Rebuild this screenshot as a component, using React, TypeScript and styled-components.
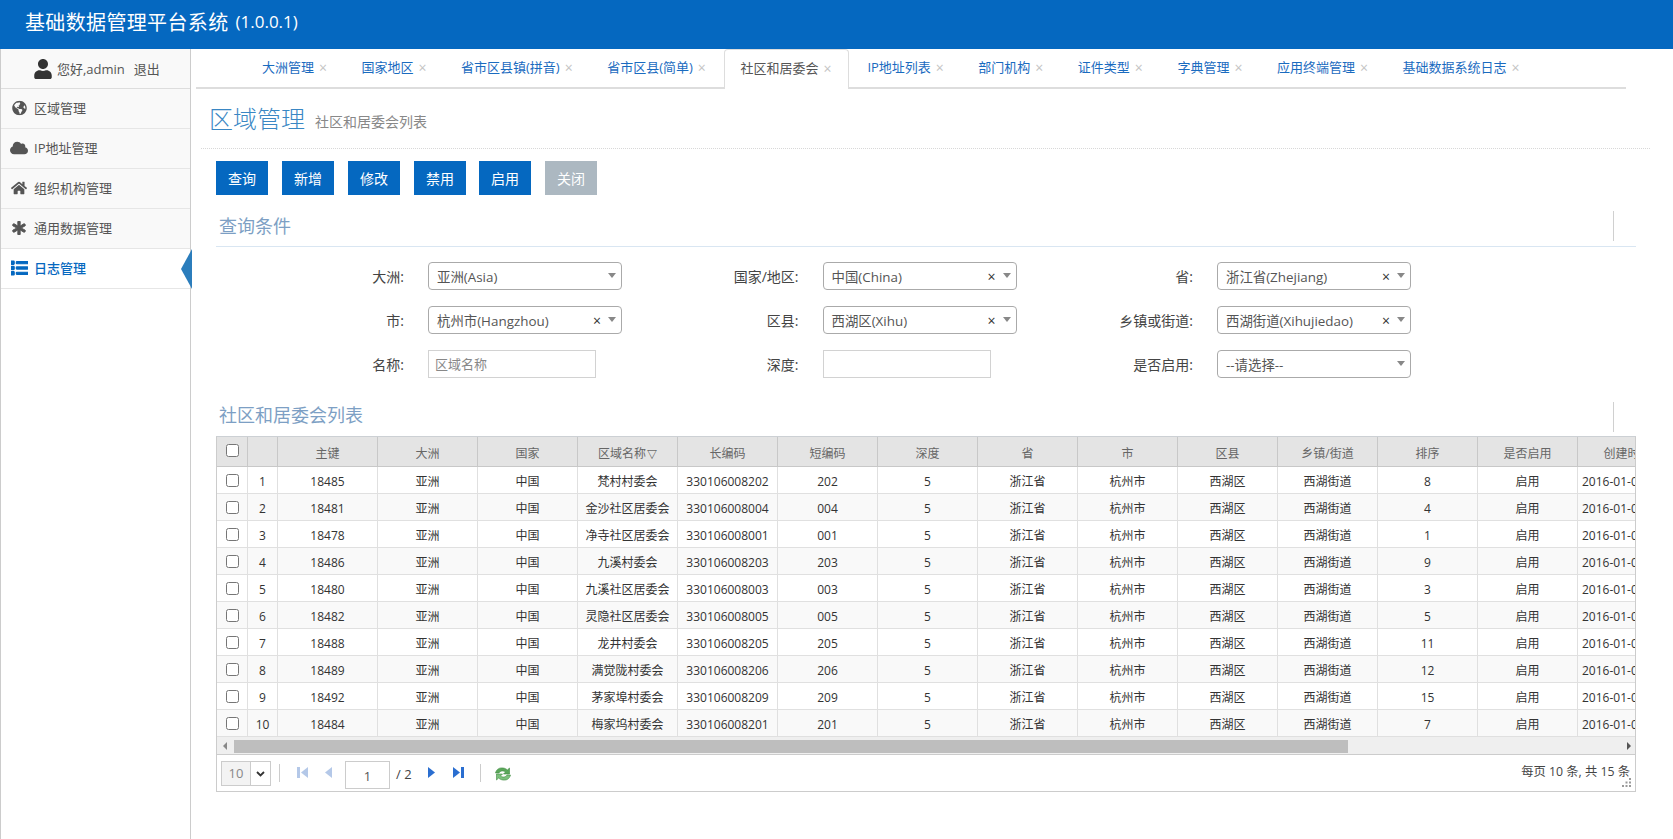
import { createGlobalStyle } from "styled-components";
import styled from "styled-components";
import { FaAsterisk, FaCloud, FaGlobeAmericas, FaHome, FaList, FaUser } from "react-icons/fa";

const BLUE = "#0568c0";

const GlobalStyle = createGlobalStyle`
  html, body {
    margin: 0;
    padding: 0;
    height: 839px;
    overflow: hidden;
    background: #fff;
    font-family: "Open Sans", "Noto Sans CJK SC", sans-serif;
    font-size: 13px;
    color: #333;
  }
  * { box-sizing: border-box; }
`;

const TopBar = styled.div`
  height: 49px;
  background: ${BLUE};
  color: #fff;
  padding-left: 25px;
  display: flex;
  align-items: center;
  padding-bottom: 6px;
`;

const BrandTitle = styled.span`
  font-size: 20px;
  letter-spacing: 0.35px;
`;

const BrandVersion = styled.span`
  font-size: 17px;
  margin-left: 7px;
`;

const Body = styled.div`
  display: flex;
  height: 790px;
`;

const Sidebar = styled.div`
  width: 191px;
  flex: none;
  border-left: 1px solid #ccc;
  border-right: 1px solid #ccc;
  height: 100%;
`;

const UserRow = styled.div`
  height: 40px;
  background: #f9f9f9;
  border-bottom: 1px solid #ddd;
  display: flex;
  align-items: center;
  padding-left: 32px;
  color: #555;
  svg {
    font-size: 20px;
    color: #333;
    margin-right: 4px;
  }
`;

const Logout = styled.span`
  margin-left: 9px;
`;

const MenuItem = styled.div<{ $active?: boolean }>`
  position: relative;
  height: 40px;
  background: ${(props) => (props.$active ? "#fff" : "#f9f9f9")};
  border-bottom: 1px solid #e6e6e6;
  display: flex;
  align-items: center;
  color: ${(props) => (props.$active ? BLUE : "#555")};
  font-weight: ${(props) => (props.$active ? 500 : 400)};
  padding: 0 0 2px 33px;
  svg {
    color: ${(props) => (props.$active ? BLUE : "#555")};
  }
`;

const MenuIcon = styled.span<{ $left: number; $size: number; $heavy?: boolean }>`
  position: absolute;
  left: ${(props) => props.$left}px;
  top: 50%;
  transform: translateY(-50%);
  display: flex;
  font-size: ${(props) => props.$size}px;
  margin-top: -1px;
  svg {
    ${(props) => (props.$heavy ? "stroke: currentColor; stroke-width: 36px;" : "")}
  }
`;

const ActiveArrow = styled.i`
  position: absolute;
  right: -2px;
  top: 0;
  width: 0;
  height: 0;
  border-top: 20px solid transparent;
  border-bottom: 20px solid transparent;
  border-right: 11px solid #2b7dbc;
`;

const Main = styled.div`
  flex: 1;
  min-width: 0;
`;

const TabBar = styled.div`
  height: 40px;
  width: 1430px;
  margin-left: 5px;
  padding-left: 50px;
  border-bottom: 2px solid #ddd;
  display: flex;
`;

const Tab = styled.div<{ $active?: boolean }>`
  height: ${(props) => (props.$active ? "40px" : "38px")};
  padding: 0 ${(props) => (props.$active ? "16.5px" : "15px")} 4px 15px;
  margin-right: 2.5px;
  display: flex;
  align-items: center;
  white-space: nowrap;
  color: ${(props) => (props.$active ? "#555" : "#1a6bbf")};
  background: #fff;
  border: 1px solid ${(props) => (props.$active ? "#ddd" : "transparent")};
  border-bottom: none;
  border-radius: 4px 4px 0 0;
`;

const TabClose = styled.span`
  color: #c4c4c4;
  font-size: 14px;
  width: 13px;
  text-align: right;
  line-height: 1;
  margin-top: 3px;
`;

const PageHead = styled.div`
  height: 60px;
  margin-left: 10px;
  width: 1449px;
  padding-left: 8px;
  border-bottom: 1px dotted #d8d8d8;
  display: flex;
  align-items: center;
`;

const PageTitle = styled.span`
  font-size: 24px;
  font-weight: 300;
  color: #3a87c4;
  margin-top: -2px;
`;

const PageSub = styled.span`
  font-size: 14px;
  color: #888;
  margin-left: 10px;
  margin-top: 5px;
`;

const Toolbar = styled.div`
  display: flex;
  margin: 12px 0 0 25px;
`;

const ActionButton = styled.div<{ $off?: boolean }>`
  width: 52px;
  height: 34px;
  margin-right: 14px;
  background: ${(props) => (props.$off ? "#acb8c1" : BLUE)};
  color: #fff;
  font-size: 14px;
  display: flex;
  align-items: center;
  justify-content: center;
  &:nth-child(4) {
    margin-right: 13px;
  }
`;

const SectionHead = styled.div<{ $line?: boolean }>`
  position: relative;
  width: 1420px;
  height: ${(props) => (props.$line ? "38px" : "30px")};
  margin: ${(props) => (props.$line ? "14px" : "22px")} 0 0 25px;
  padding-left: 3px;
  padding-top: ${(props) => (props.$line ? "2px" : "0")};
  font-size: 18px;
  color: #7d9fc4;
  border-bottom: ${(props) => (props.$line ? "1px solid #d9e6f2" : "none")};
  display: flex;
  align-items: flex-start;
  line-height: 30px;
`;

const SectionTick = styled.i`
  position: absolute;
  right: 22px;
  top: 2px;
  height: 30px;
  width: 1px;
  background: #d0d0d0;
`;

const FormGrid = styled.div`
  display: grid;
  grid-template-columns: repeat(3, 394.5px);
  grid-auto-rows: 28px;
  row-gap: 16px;
  margin: 15px 0 0 25px;
`;

const FieldGroup = styled.div`
  display: flex;
  align-items: center;
`;

const FieldLabel = styled.label`
  width: 188px;
  flex: none;
  margin-right: 24px;
  text-align: right;
  font-size: 14px;
  color: #444;
`;

const SelectBox = styled.div`
  position: relative;
  width: 194px;
  flex: none;
  height: 28px;
  border: 1px solid #aaa;
  border-radius: 4px;
  padding-left: 8px;
  line-height: 28px;
  font-size: 13.4px;
  color: #555;
  white-space: nowrap;
`;

const SelectClear = styled.span`
  position: absolute;
  right: 20px;
  top: 0;
  color: #333;
  font-size: 14px;
`;

const SelectCaret = styled.i`
  position: absolute;
  right: 5px;
  top: 10px;
  width: 0;
  height: 0;
  border-left: 4px solid transparent;
  border-right: 4px solid transparent;
  border-top: 5px solid #888;
`;

const TextBox = styled.div`
  width: 168px;
  flex: none;
  height: 28px;
  border: 1px solid #d2d2d2;
  padding-left: 6px;
  line-height: 26px;
  color: #888;
`;

const GridWrap = styled.div`
  width: 1420px;
  height: 356px;
  margin: 6px 0 0 25px;
  border: 1px solid #ccc;
  border-top: 1px solid #ccd0d4;
  overflow: hidden;
  position: relative;
`;

const GridTable = styled.table`
  border-collapse: separate;
  border-spacing: 0;
  table-layout: fixed;
  width: 1361px;
  font-size: 12px;
`;

const HeadCell = styled.th`
  height: 30px;
  padding: 2px 0 0;
  background: #e4e4e4;
  border-right: 1px solid #c8c8c8;
  border-bottom: 1px solid #c8c8c8;
  color: #666;
  font-weight: 400;
  text-align: center;
  white-space: nowrap;
  overflow: visible;
`;

const BodyCell = styled.td<{ $odd: boolean; $date?: boolean }>`
  height: 27px;
  padding: 2px 0 0 ${(props) => (props.$date ? "4px" : "0")};
  background: ${(props) => (props.$odd ? "#f9f9f9" : "#fff")};
  border-right: 1px solid #e0e0e0;
  border-bottom: 1px solid #e0e0e0;
  text-align: ${(props) => (props.$date ? "left" : "center")};
  white-space: nowrap;
  overflow: hidden;
`;

const CheckCell = styled(BodyCell)`
  padding: 0;
`;

const RowCheck = styled.input`
  display: block;
  margin: 0 auto;
  width: 13px;
  height: 13px;
`;

const HeadCheck = styled(RowCheck)`
  margin: -5px auto 0;
`;

const SortMark = styled.span`
  font-size: 10px;
  color: #333;
  margin-left: 1px;
`;

const ScrollTrack = styled.div`
  height: 18px;
  background: #efefef;
  border-bottom: 1px solid #ccc;
  position: relative;
  display: flex;
  align-items: center;
  justify-content: space-between;
  padding: 0 4px 0 6px;
`;

const ScrollThumb = styled.div`
  position: absolute;
  left: 17px;
  top: 3px;
  width: 1114px;
  height: 13px;
  background: #bebebe;
`;

const ScrollArrow = styled.i<{ $dir: "left" | "right"; $dark?: boolean }>`
  width: 0;
  height: 0;
  border-top: 4px solid transparent;
  border-bottom: 4px solid transparent;
  ${(props) => (props.$dir === "left" ? "border-right" : "border-left")}: 4px solid
    ${(props) => (props.$dark ? "#555" : "#888")};
`;

const Pager = styled.div`
  position: relative;
  height: 35px;
  display: flex;
  align-items: flex-start;
  padding: 6px 0 0 4px;
`;

const PageSizeBox = styled.div`
  width: 50px;
  height: 25px;
  border: 1px solid #ccc;
  display: flex;
`;

const PageSizeValue = styled.div`
  width: 29px;
  background: #f3f3f3;
  border-right: 1px solid #ccc;
  color: #888;
  font-size: 13px;
  line-height: 23px;
  text-align: center;
`;

const PageSizeCaret = styled.div`
  flex: 1;
  display: flex;
  align-items: center;
  justify-content: center;
`;

const PagerSep = styled.i<{ $left: number }>`
  width: 1px;
  height: 18px;
  margin: 3px 0 0 ${(props) => props.$left}px;
  background: #ccc;
`;

const PagerIcon = styled.svg<{ $left: number }>`
  display: block;
  margin: 5px 0 0 ${(props) => props.$left}px;
  flex: none;
`;

const PageInput = styled.div`
  width: 45px;
  height: 28px;
  margin-left: 13px;
  border: 1px solid #ccc;
  text-align: center;
  line-height: 29px;
  color: #555;
  font-size: 13px;
`;

const PageTotal = styled.span`
  margin-left: 6px;
  line-height: 26px;
  color: #444;
  font-size: 13px;
  white-space: nowrap;
`;

const PagerInfo = styled.span`
  position: absolute;
  right: 5px;
  top: 7px;
  font-size: 12.3px;
  color: #444;
`;

const ResizeGrip = styled.svg`
  position: absolute;
  right: 3px;
  bottom: 2px;
`;

interface RowData {
  id: string;
  name: string;
  code: string;
  sort: string;
}

const rows: RowData[] = [
  { id: "18485", name: "梵村村委会", code: "202", sort: "8" },
  { id: "18481", name: "金沙社区居委会", code: "004", sort: "4" },
  { id: "18478", name: "净寺社区居委会", code: "001", sort: "1" },
  { id: "18486", name: "九溪村委会", code: "203", sort: "9" },
  { id: "18480", name: "九溪社区居委会", code: "003", sort: "3" },
  { id: "18482", name: "灵隐社区居委会", code: "005", sort: "5" },
  { id: "18488", name: "龙井村委会", code: "205", sort: "11" },
  { id: "18489", name: "满觉陇村委会", code: "206", sort: "12" },
  { id: "18492", name: "茅家埠村委会", code: "209", sort: "15" },
  { id: "18484", name: "梅家坞村委会", code: "201", sort: "7" },
];

const tabs = [
  "大洲管理",
  "国家地区",
  "省市区县镇(拼音)",
  "省市区县(简单)",
  "社区和居委会",
  "IP地址列表",
  "部门机构",
  "证件类型",
  "字典管理",
  "应用终端管理",
  "基础数据系统日志",
];

const columns = ["主键", "大洲", "国家", "区域名称", "长编码", "短编码", "深度", "省", "市", "区县", "乡镇/街道", "排序", "是否启用", "创建时间"];

const App = () => {
  return (
    <>
      <GlobalStyle />
      <TopBar>
        <BrandTitle>基础数据管理平台系统</BrandTitle>
        <BrandVersion>(1.0.0.1)</BrandVersion>
      </TopBar>
      <Body>
        <Sidebar>
          <UserRow>
            <FaUser />
            您好,admin
            <Logout>退出</Logout>
          </UserRow>
          <MenuItem><MenuIcon $left={11} $size={15}><FaGlobeAmericas /></MenuIcon>区域管理</MenuItem>
          <MenuItem><MenuIcon $left={9} $size={18}><FaCloud /></MenuIcon>IP地址管理</MenuItem>
          <MenuItem><MenuIcon $left={10} $size={16}><FaHome /></MenuIcon>组织机构管理</MenuItem>
          <MenuItem><MenuIcon $left={11} $size={14} $heavy><FaAsterisk /></MenuIcon>通用数据管理</MenuItem>
          <MenuItem $active><MenuIcon $left={10} $size={17} $heavy><FaList /></MenuIcon>日志管理<ActiveArrow /></MenuItem>
        </Sidebar>
        <Main>
          <TabBar>
            {tabs.map((tab) => (
              <Tab key={tab} $active={tab === "社区和居委会"}>
                {tab}
                <TabClose>×</TabClose>
              </Tab>
            ))}
          </TabBar>
          <PageHead>
            <PageTitle>区域管理</PageTitle>
            <PageSub>社区和居委会列表</PageSub>
          </PageHead>
          <Toolbar>
            <ActionButton>查询</ActionButton>
            <ActionButton>新增</ActionButton>
            <ActionButton>修改</ActionButton>
            <ActionButton>禁用</ActionButton>
            <ActionButton>启用</ActionButton>
            <ActionButton $off>关闭</ActionButton>
          </Toolbar>
          <SectionHead $line>
            查询条件
            <SectionTick />
          </SectionHead>
          <FormGrid>
            <FieldGroup>
              <FieldLabel>大洲:</FieldLabel>
              <SelectBox>亚洲(Asia)<SelectCaret /></SelectBox>
            </FieldGroup>
            <FieldGroup>
              <FieldLabel>国家/地区:</FieldLabel>
              <SelectBox>中国(China)<SelectClear>×</SelectClear><SelectCaret /></SelectBox>
            </FieldGroup>
            <FieldGroup>
              <FieldLabel>省:</FieldLabel>
              <SelectBox>浙江省(Zhejiang)<SelectClear>×</SelectClear><SelectCaret /></SelectBox>
            </FieldGroup>
            <FieldGroup>
              <FieldLabel>市:</FieldLabel>
              <SelectBox>杭州市(Hangzhou)<SelectClear>×</SelectClear><SelectCaret /></SelectBox>
            </FieldGroup>
            <FieldGroup>
              <FieldLabel>区县:</FieldLabel>
              <SelectBox>西湖区(Xihu)<SelectClear>×</SelectClear><SelectCaret /></SelectBox>
            </FieldGroup>
            <FieldGroup>
              <FieldLabel>乡镇或街道:</FieldLabel>
              <SelectBox>西湖街道(Xihujiedao)<SelectClear>×</SelectClear><SelectCaret /></SelectBox>
            </FieldGroup>
            <FieldGroup>
              <FieldLabel>名称:</FieldLabel>
              <TextBox>区域名称</TextBox>
            </FieldGroup>
            <FieldGroup>
              <FieldLabel>深度:</FieldLabel>
              <TextBox />
            </FieldGroup>
            <FieldGroup>
              <FieldLabel>是否启用:</FieldLabel>
              <SelectBox>--请选择--<SelectCaret /></SelectBox>
            </FieldGroup>
          </FormGrid>
          <SectionHead>
            社区和居委会列表
            <SectionTick />
          </SectionHead>
          <GridWrap>
            <GridTable>
              <colgroup>
                <col width={31} />
                <col width={30} />
                {columns.map((col) => (
                  <col key={col} width={100} />
                ))}
              </colgroup>
              <thead>
                <tr>
                  <HeadCell><HeadCheck type="checkbox" readOnly /></HeadCell>
                  <HeadCell />
                  {columns.map((col) => (
                    <HeadCell key={col}>
                      {col}
                      {col === "区域名称" && <SortMark>▽</SortMark>}
                    </HeadCell>
                  ))}
                </tr>
              </thead>
              <tbody>
                {rows.map((row, index) => {
                  const odd = index % 2 === 1;
                  const cells = [row.id, "亚洲", "中国", row.name, `330106008${row.code}`, row.code, "5", "浙江省", "杭州市", "西湖区", "西湖街道", row.sort, "启用"];
                  return (
                    <tr key={row.id}>
                      <CheckCell $odd={odd}><RowCheck type="checkbox" readOnly /></CheckCell>
                      <BodyCell $odd={odd}>{index + 1}</BodyCell>
                      {cells.map((cell, cellIndex) => (
                        <BodyCell key={cellIndex} $odd={odd}>{cell}</BodyCell>
                      ))}
                      <BodyCell $odd={odd} $date>2016-01-01 12:00:00</BodyCell>
                    </tr>
                  );
                })}
              </tbody>
            </GridTable>
            <ScrollTrack>
              <ScrollArrow $dir="left" />
              <ScrollThumb />
              <ScrollArrow $dir="right" $dark />
            </ScrollTrack>
            <Pager>
              <PageSizeBox>
                <PageSizeValue>10</PageSizeValue>
                <PageSizeCaret>
                  <svg width="9" height="6" viewBox="0 0 9 6">
                    <path d="M1 1l3.5 3.5L8 1" fill="none" stroke="#333" strokeWidth="1.8" />
                  </svg>
                </PageSizeCaret>
              </PageSizeBox>
              <PagerSep $left={8} />
              <PagerIcon $left={17} width="11" height="13" viewBox="0 0 11 13">
                <rect x="0" y="1" width="3" height="11" fill="#b4c8e8" />
                <path d="M11 1v11L4 6.5z" fill="#b4c8e8" />
              </PagerIcon>
              <PagerIcon $left={17} width="7" height="13" viewBox="0 0 7 13">
                <path d="M7 1v11L0 6.5z" fill="#b4c8e8" />
              </PagerIcon>
              <PageInput>1</PageInput>
              <PageTotal>/ 2</PageTotal>
              <PagerIcon $left={16} width="7" height="13" viewBox="0 0 7 13">
                <path d="M0 1v11l7-5.5z" fill="#2a6ed0" />
              </PagerIcon>
              <PagerIcon $left={18} width="11" height="13" viewBox="0 0 11 13">
                <path d="M0 1v11l7-5.5z" fill="#2a6ed0" />
                <rect x="8" y="1" width="3" height="11" fill="#2a6ed0" />
              </PagerIcon>
              <PagerSep $left={16} />
              <PagerIcon $left={13} width="18" height="16" viewBox="0 0 17 16">
                <path d="M1 7C2 3 5 1.500 8.500 2c2 .2 3.300 1 4.300 2L15 2v6H9l2-2c-1.700-1.500-5-1.500-6.500 1z" fill="#5aa75a" stroke="#3f8a3f" strokeWidth=".6" />
                <path d="M16 9c-1 4-4 5.500-7.500 5-2-.2-3.300-1-4.300-2L2 14V8h6l-2 2c1.700 1.500 5 1.500 6.500-1z" fill="#7cc07c" stroke="#3f8a3f" strokeWidth=".6" />
              </PagerIcon>
              <PagerInfo>每页 10 条, 共 15 条</PagerInfo>
              <ResizeGrip width="10" height="10" viewBox="0 0 10 10">
                <path d="M7 0h2v2H7zM3.500 3.500h2v2h-2zM7 3.500h2v2H7zM0 7h2v2H0zM3.500 7h2v2h-2zM7 7h2v2H7z" fill="#999" />
              </ResizeGrip>
            </Pager>
          </GridWrap>
        </Main>
      </Body>
    </>
  );
};

export default App;
